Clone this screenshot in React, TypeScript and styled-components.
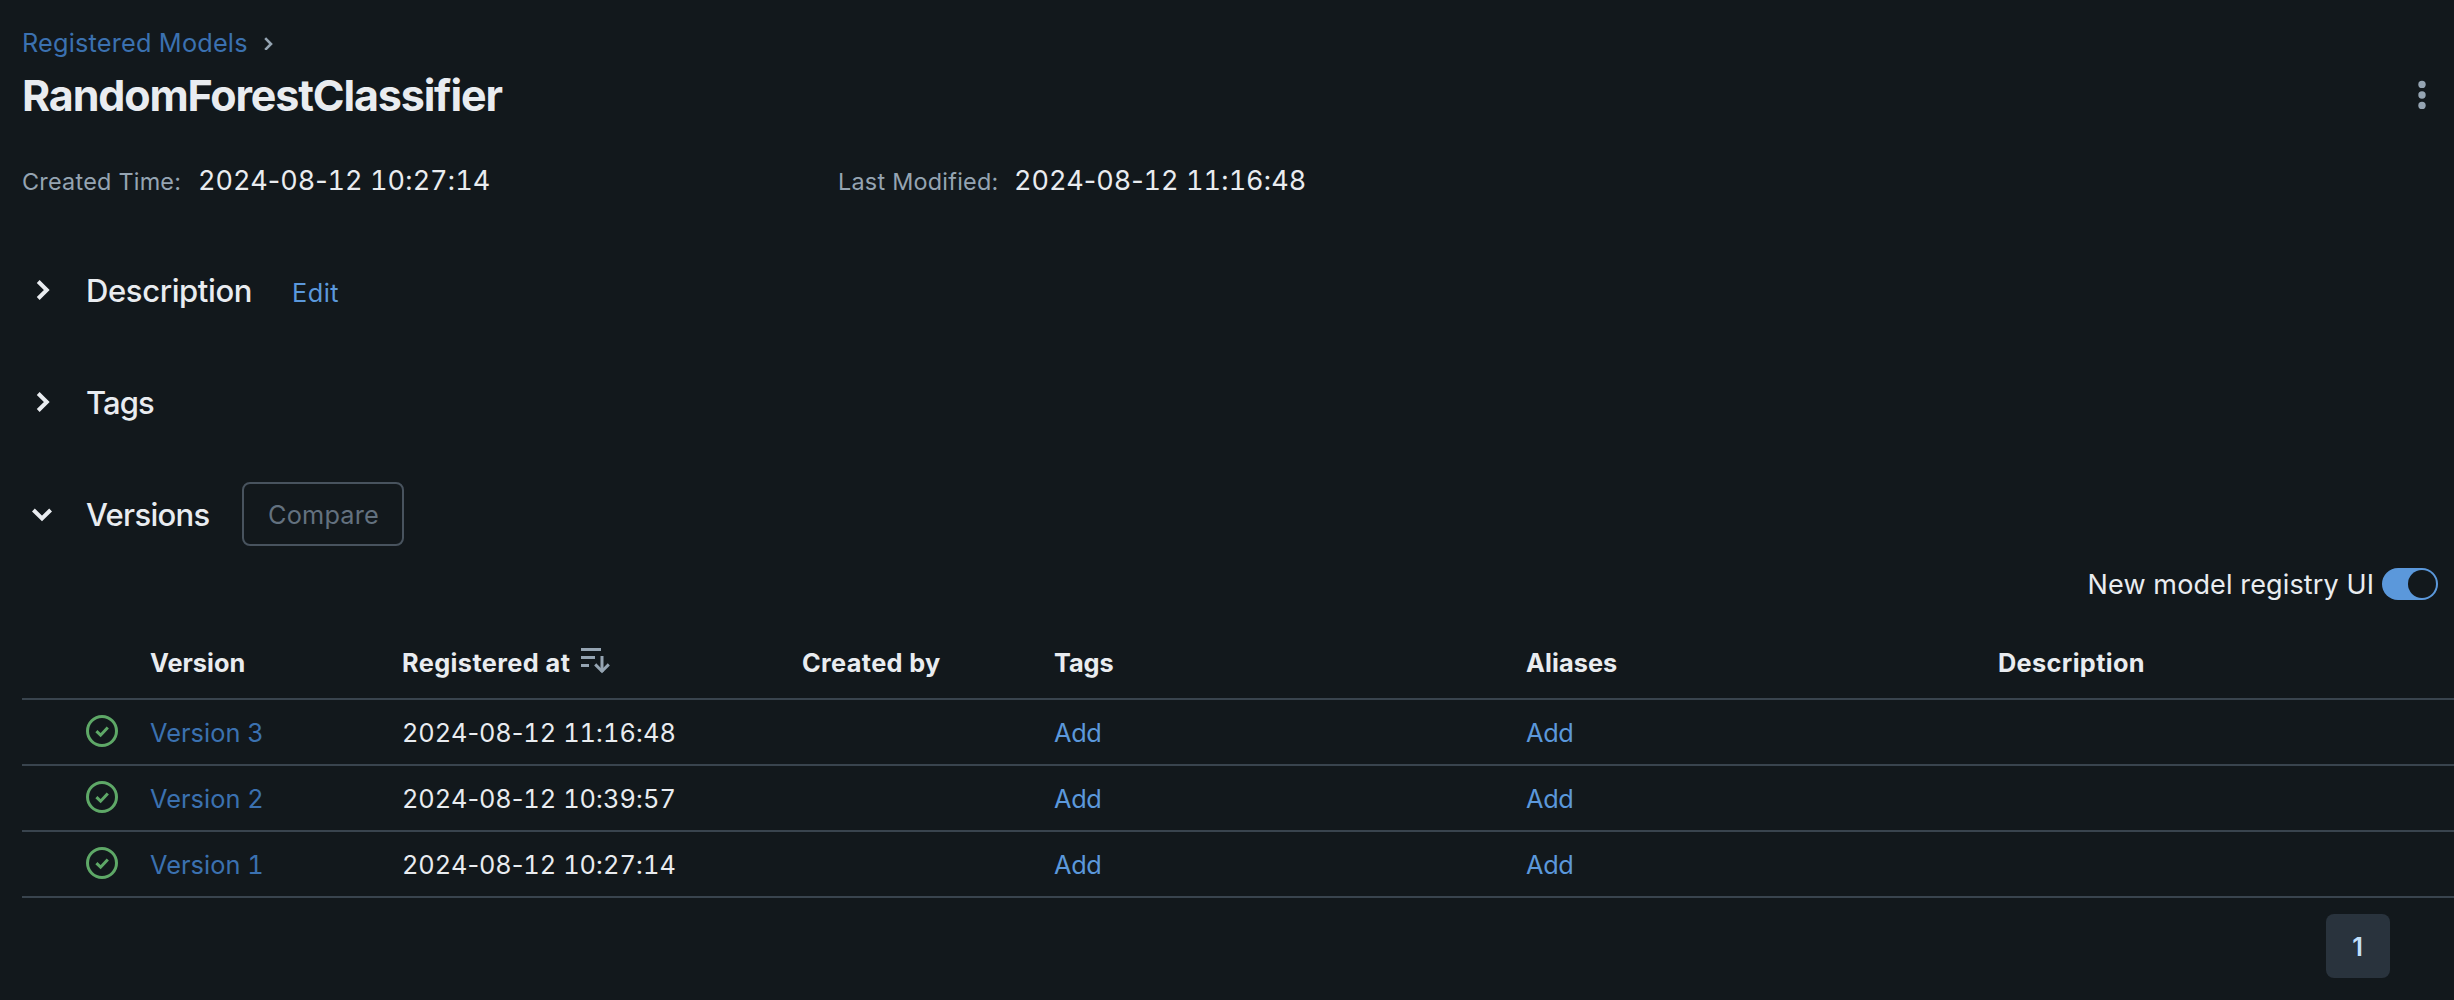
import React from 'react';
import styled, { createGlobalStyle } from 'styled-components';

const color = {
  background: '#12181c',
  text: '#e9ecf0',
  muted: '#95a4b2',
  disabled: '#63717f',
  link: '#3b71b0',
  action: '#5b98db',
  success: '#5ea867',
  border: '#39444e',
  buttonBorder: '#48535e',
  pageBackground: '#29333d',
  pageText: '#c1dffa',
};

const GlobalStyle = createGlobalStyle`
  *, *::before, *::after { box-sizing: border-box; }
  body {
    margin: 0;
    background: ${color.background};
    color: ${color.text};
    font-family: Inter, "Liberation Sans", sans-serif;
    font-size: 25.3px;
    overflow: hidden;
  }
  svg { display: block; flex: none; }
`;

const Page = styled.main`
  height: 1000px;
  padding: 22px 0 0 22px;
  display: flex;
  flex-direction: column;
`;

const Breadcrumb = styled.nav`
  display: flex;
  align-items: center;
  gap: 15px;
  height: 40px;
`;

const BreadcrumbLink = styled.a`
  color: ${color.link};
  letter-spacing: 0.18px;
`;

const TitleRow = styled.header`
  display: flex;
  align-items: center;
  justify-content: space-between;
  height: 64px;
  margin-top: 1px;
  padding-right: 27px;
`;

const Title = styled.h1`
  margin: 0;
  font-size: 43px;
  font-weight: 650;
  line-height: 64px;
  letter-spacing: -1.16px;
`;

const MetaRow = styled.dl`
  display: grid;
  grid-template-columns: 816px 1fr;
  height: 40px;
  margin: 33px 0 0;
  line-height: 41px;
`;

const MetaItem = styled.div`
  display: flex;
  align-items: baseline;
`;

const MetaLabel = styled.dt`
  width: 176px;
  color: ${color.muted};
  font-size: 23.4px;
  letter-spacing: 0.24px;
`;

const MetaValue = styled.dd`
  margin: 0;
  font-size: 27px;
`;

const Sections = styled.div`
  display: flex;
  flex-direction: column;
  gap: 48px;
  margin-top: 58px;
`;

const SectionHeader = styled.div`
  display: flex;
  align-items: center;
  height: 64px;
`;

const Toggle = styled.span`
  display: flex;
  width: 64px;
`;

const SectionTitle = styled.h2<{ $tracking: number; $width: number }>`
  margin: 0;
  width: ${(p) => p.$width}px;
  font-size: 31px;
  font-weight: 500;
  line-height: 65px;
  letter-spacing: ${(p) => p.$tracking}px;
  white-space: nowrap;
`;

const EditLink = styled.a`
  color: ${color.action};
  letter-spacing: 0.5px;
  padding-top: 4px;
`;

const CompareButton = styled.button`
  width: 162px;
  height: 64px;
  padding: 0 0 0 1px;
  border: 2px solid ${color.buttonBorder};
  border-radius: 8px;
  background: transparent;
  color: ${color.disabled};
  font: inherit;
  letter-spacing: 0.2px;
`;

const SwitchRow = styled.label`
  display: flex;
  justify-content: flex-end;
  align-items: center;
  gap: 8px;
  height: 32px;
  margin-top: 22px;
  padding-right: 16px;
  font-size: 27px;
  letter-spacing: 0.12px;
`;

const Switch = styled.span`
  display: flex;
  justify-content: flex-end;
  width: 56px;
  height: 32px;
  padding: 2px;
  border-radius: 16px;
  background: ${color.action};
`;

const Knob = styled.span`
  width: 28px;
  height: 28px;
  border-radius: 50%;
  background: ${color.background};
`;

const Table = styled.div`
  display: flex;
  flex-direction: column;
  margin-top: 26px;
`;

const Row = styled.div<{ $head?: boolean }>`
  display: grid;
  grid-template-columns: 64px 252px 400px 252px 472px 472px 1fr;
  align-items: center;
  height: ${(p) => (p.$head ? 74 : 66)}px;
  padding-left: 64px;
  border-bottom: 2px solid ${color.border};
  font-weight: ${(p) => (p.$head ? 650 : 400)};
`;

const Cell = styled.div<{ $tracking?: number }>`
  display: flex;
  align-items: center;
  letter-spacing: ${(p) => p.$tracking ?? 0}px;
`;

const StatusCell = styled.div`
  padding-bottom: 2px;
`;

const VersionLink = styled.a`
  color: ${color.link};
  font-variant-numeric: tabular-nums;
  letter-spacing: 0.06px;
`;

const DateText = styled.span`
  letter-spacing: -0.002em;
  white-space: pre;
`;

const Digits = styled.span`
  font-variant-numeric: tabular-nums;
`;

const AddLink = styled.a`
  color: ${color.action};
  letter-spacing: -0.3px;
`;

const SortIconBox = styled.span`
  display: flex;
  margin-left: 11px;
  padding-bottom: 2px;
`;

const Pagination = styled.div`
  display: flex;
  justify-content: flex-end;
  margin-top: 16px;
  padding-right: 64px;
`;

const PageNumber = styled.button`
  width: 64px;
  height: 64px;
  padding: 0 1px 0 0;
  border: 0;
  border-radius: 8px;
  background: ${color.pageBackground};
  color: ${color.pageText};
  font: inherit;
  font-weight: 600;
`;

const Timestamp = ({ value }: { value: string }) => (
  <DateText>
    {value.split(/(\d+)/).map((part, i) => (i % 2 ? <Digits key={i}>{part}</Digits> : part))}
  </DateText>
);

const Chevron = ({ open }: { open?: boolean }) => (
  <svg width="40" height="40" viewBox="0 0 40 40" fill="none" stroke={color.text} strokeWidth="4">
    <path d={open ? 'M11.4 16 L20 24.4 L28.6 16' : 'M16.2 11.5 L24.8 20 L16.2 28.5'} />
  </svg>
);

const BreadcrumbChevron = () => (
  <svg width="12" height="16" viewBox="0 0 12 16" fill="none" stroke={color.muted} strokeWidth="2.6">
    <path d="M2.2 4.2 L8 10 L2.2 15.8" />
  </svg>
);

const KebabIcon = () => (
  <svg width="10" height="30" viewBox="0 0 10 30" fill={color.muted}>
    <circle cx="5" cy="4.4" r="3.7" />
    <circle cx="5" cy="15" r="3.7" />
    <circle cx="5" cy="25.4" r="3.7" />
  </svg>
);

const SortIcon = () => (
  <svg width="30" height="28" viewBox="0 0 30 28" fill="none" stroke={color.muted} strokeWidth="3">
    <path d="M0 2.5 H20 M0 10.5 H14 M0 18.5 H8 M21 9 V25" />
    <path d="M14.2 17.4 L21 24.2 L27.8 17.4" />
  </svg>
);

const CheckCircleIcon = () => (
  <svg width="32" height="32" viewBox="0 0 32 32" fill="none" stroke={color.success} strokeWidth="3">
    <circle cx="16" cy="16" r="14.5" />
    <path d="M10.4 16.2 L14.6 20.2 L21.8 12.4" />
  </svg>
);

const versions = [
  { name: 'Version 3', registered: '2024-08-12 11:16:48' },
  { name: 'Version 2', registered: '2024-08-12 10:39:57' },
  { name: 'Version 1', registered: '2024-08-12 10:27:14' },
];

export default function App() {
  return (
    <>
      <GlobalStyle />
      <Page>
        <Breadcrumb>
          <BreadcrumbLink>Registered Models</BreadcrumbLink>
          <BreadcrumbChevron />
        </Breadcrumb>
        <TitleRow>
          <Title>RandomForestClassifier</Title>
          <KebabIcon />
        </TitleRow>
        <MetaRow>
          <MetaItem>
            <MetaLabel>Created Time:</MetaLabel>
            <MetaValue><Timestamp value="2024-08-12 10:27:14" /></MetaValue>
          </MetaItem>
          <MetaItem>
            <MetaLabel>Last Modified:</MetaLabel>
            <MetaValue><Timestamp value="2024-08-12 11:16:48" /></MetaValue>
          </MetaItem>
        </MetaRow>
        <Sections>
          <SectionHeader>
            <Toggle><Chevron /></Toggle>
            <SectionTitle $tracking={-0.38} $width={206}>Description</SectionTitle>
            <EditLink>Edit</EditLink>
          </SectionHeader>
          <SectionHeader>
            <Toggle><Chevron /></Toggle>
            <SectionTitle $tracking={-0.9} $width={100}>Tags</SectionTitle>
          </SectionHeader>
          <SectionHeader>
            <Toggle><Chevron open /></Toggle>
            <SectionTitle $tracking={-0.7} $width={156}>Versions</SectionTitle>
            <CompareButton disabled>Compare</CompareButton>
          </SectionHeader>
        </Sections>
        <SwitchRow>
          New model registry UI
          <Switch><Knob /></Switch>
        </SwitchRow>
        <Table>
          <Row $head>
            <span />
            <Cell $tracking={0.05}>Version</Cell>
            <Cell $tracking={0.4}>
              Registered at
              <SortIconBox><SortIcon /></SortIconBox>
            </Cell>
            <Cell $tracking={0.35}>Created by</Cell>
            <Cell $tracking={-0.1}>Tags</Cell>
            <Cell $tracking={0.1}>Aliases</Cell>
            <Cell $tracking={0.35}>Description</Cell>
          </Row>
          {versions.map((v) => (
            <Row key={v.name}>
              <StatusCell><CheckCircleIcon /></StatusCell>
              <Cell><VersionLink>{v.name}</VersionLink></Cell>
              <Cell><Timestamp value={v.registered} /></Cell>
              <span />
              <Cell><AddLink>Add</AddLink></Cell>
              <Cell><AddLink>Add</AddLink></Cell>
              <span />
            </Row>
          ))}
        </Table>
        <Pagination>
          <PageNumber>1</PageNumber>
        </Pagination>
      </Page>
    </>
  );
}
